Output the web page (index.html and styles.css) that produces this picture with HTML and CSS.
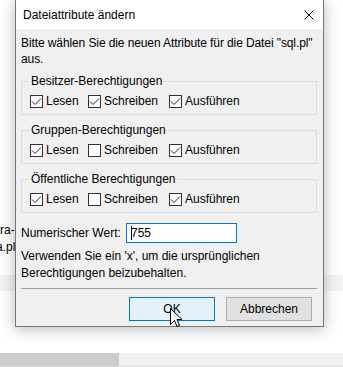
FILE: index.html
```html
<!DOCTYPE html>
<html lang="de">
<head>
  <meta charset="UTF-8" />
  <title>Dateiattribute ändern</title>
  <link rel="stylesheet" href="styles.css">
</head>
<body>
  <div class="desktop">
    <div class="files">
      <div class="file">ra-</div>
      <div class="file shift">a.pl</div>
    </div>
    <div class="band"></div>
    <div class="spacer"></div>
    <div class="statusbar"><div class="statusfill"></div></div>
  </div>

  <div class="dialog">
    <div class="titlebar">
      <span class="title">Dateiattribute ändern</span>
      <span class="close">
        <svg width="10" height="10" viewBox="0 0 10 10"><path d="M0.5 0.5 L9.5 9.5 M9.5 0.5 L0.5 9.5" stroke="#000" stroke-width="1" fill="none"/></svg>
      </span>
    </div>

    <div class="content">
      <p class="intro">Bitte wählen Sie die neuen Attribute für die Datei "sql.pl"<br>aus.</p>

      <fieldset class="group">
        <legend>Besitzer-Berechtigungen</legend>
        <div class="checks">
          <label class="check"><span class="box on"><svg width="11" height="11" viewBox="0 0 11 11"><path d="M1 5.5 L4 8.5 L10 2.5" stroke="#222" fill="none"/></svg></span>Lesen</label>
          <label class="check"><span class="box on"><svg width="11" height="11" viewBox="0 0 11 11"><path d="M1 5.5 L4 8.5 L10 2.5" stroke="#222" fill="none"/></svg></span>Schreiben</label>
          <label class="check"><span class="box on"><svg width="11" height="11" viewBox="0 0 11 11"><path d="M1 5.5 L4 8.5 L10 2.5" stroke="#222" fill="none"/></svg></span>Ausführen</label>
        </div>
      </fieldset>

      <fieldset class="group">
        <legend>Gruppen-Berechtigungen</legend>
        <div class="checks">
          <label class="check"><span class="box on"><svg width="11" height="11" viewBox="0 0 11 11"><path d="M1 5.5 L4 8.5 L10 2.5" stroke="#222" fill="none"/></svg></span>Lesen</label>
          <label class="check"><span class="box"></span>Schreiben</label>
          <label class="check"><span class="box on"><svg width="11" height="11" viewBox="0 0 11 11"><path d="M1 5.5 L4 8.5 L10 2.5" stroke="#222" fill="none"/></svg></span>Ausführen</label>
        </div>
      </fieldset>

      <fieldset class="group">
        <legend>Öffentliche Berechtigungen</legend>
        <div class="checks">
          <label class="check"><span class="box on"><svg width="11" height="11" viewBox="0 0 11 11"><path d="M1 5.5 L4 8.5 L10 2.5" stroke="#222" fill="none"/></svg></span>Lesen</label>
          <label class="check"><span class="box"></span>Schreiben</label>
          <label class="check"><span class="box on"><svg width="11" height="11" viewBox="0 0 11 11"><path d="M1 5.5 L4 8.5 L10 2.5" stroke="#222" fill="none"/></svg></span>Ausführen</label>
        </div>
      </fieldset>

      <div class="numeric">
        <span class="numlabel">Numerischer Wert:</span>
        <div class="numinput"><span class="caret"></span>755</div>
      </div>

      <p class="hint">Verwenden Sie ein 'x', um die ursprünglichen Berechtigungen beizubehalten.</p>

      <div class="separator"></div>

      <div class="buttons">
        <button class="btn default">OK</button>
        <button class="btn">Abbrechen</button>
      </div>
    </div>
  </div>

  <svg class="cursor" width="13" height="20" viewBox="0 0 13 20">
    <path d="M0.5 0.5 L0.5 16.5 L4.5 12.5 L7 18.5 L9.5 17.5 L7 11.5 L12 11.5 Z" fill="#fff" stroke="#000" stroke-width="1"/>
  </svg>
</body>
</html>
```

FILE: styles.css
```css
body {
  margin: 0;
  width: 343px;
  height: 367px;
  overflow: hidden;
  position: relative;
  background: #fff;
  font-family: "Liberation Sans", Arial, sans-serif;
  font-size: 12px;
  color: #000;
}
.desktop {
  display: flex;
  flex-direction: column;
  height: 367px;
}
.files {
  padding-top: 222px;
  line-height: 17px;
}
.file {
  white-space: nowrap;
}
.file.shift {
  text-indent: -4px;
}
.band {
  margin-top: 19px;
  height: 18px;
  background: #f3f3f3;
}
.spacer {
  height: 70px;
}
.statusbar {
  height: 15px;
  background: #f0f0f0;
  border-bottom: 1px solid #dcdcdc;
  display: flex;
}
.statusfill {
  width: 119px;
  background: #cccccc;
}

.dialog {
  position: absolute;
  left: 15px;
  top: -1px;
  width: 309px;
  box-sizing: border-box;
  border: 1px solid #777;
  background: #f0f0f0;
  box-shadow: 0 2px 14px rgba(0, 0, 0, 0.28);
}
.titlebar {
  height: 29px;
  background: #fff;
  display: flex;
  align-items: center;
  justify-content: space-between;
  padding-left: 7px;
}
.close {
  width: 28px;
  display: flex;
  justify-content: center;
  align-items: center;
}
.content {
  padding: 6px 6px 5px 5px;
  line-height: 16px;
}
.intro {
  margin: 0;
  white-space: nowrap;
  letter-spacing: -0.1px;
}
.group {
  margin: 6px 0 0 0;
  padding: 0 8px 5px 8px;
  border: 1px solid #dcdcdc;
  min-width: 0;
}
.group + .group {
  margin-top: 7px;
}
.group legend {
  padding: 0 1px;
  line-height: 16px;
}
.checks {
  display: flex;
  margin-top: 4px;
  height: 16px;
  align-items: center;
}
.check {
  display: flex;
  align-items: center;
  white-space: nowrap;
}
.check:nth-child(1) { width: 58px; }
.check:nth-child(2) { width: 81px; }
.box {
  width: 11px;
  height: 11px;
  border: 1px solid #333;
  background: #fff;
  margin-right: 3px;
  display: flex;
}
.numeric {
  display: flex;
  align-items: center;
  margin-top: 10px;
}
.numlabel {
  width: 105px;
  white-space: nowrap;
}
.numinput {
  width: 111px;
  height: 20px;
  box-sizing: border-box;
  border: 1px solid #0078d7;
  background: #fff;
  display: flex;
  align-items: center;
  padding-left: 4px;
}
.caret {
  width: 1px;
  height: 14px;
  background: #000;
  margin-right: -1px;
}
.hint {
  margin: 5px 0 0 0;
  line-height: 17px;
}
.separator {
  margin-top: 6px;
  height: 1px;
  background: #a0a0a0;
}
.buttons {
  display: flex;
  justify-content: flex-end;
  gap: 11px;
  margin-top: 8px;
  padding-right: 5px;
}
.btn {
  width: 86px;
  height: 24px;
  font-family: inherit;
  font-size: 12px;
  color: #000;
  background: #e1e1e1;
  border: 1px solid #adadad;
  padding: 0;
}
.btn.default {
  background: #e5f1fb;
  border-color: #0078d7;
}
.cursor {
  position: absolute;
  left: 170px;
  top: 308px;
}
```
